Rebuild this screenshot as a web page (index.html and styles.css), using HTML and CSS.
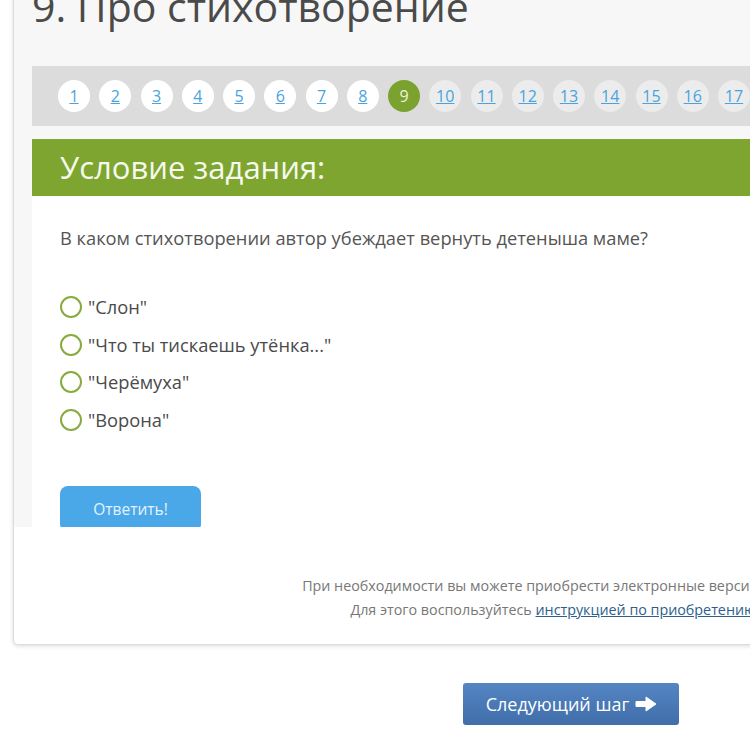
FILE: index.html
```html
<!DOCTYPE html>
<html lang="ru">
<head>
  <meta charset="UTF-8">
  <title>9. Про стихотворение</title>
  <link rel="stylesheet" href="styles.css">
</head>
<body>

<div class="page">
  <div class="card">
    <!-- серая верхняя часть: заголовок, номера заданий, само задание -->
    <div class="card-top">
      <h1 class="task-title">9. Про стихотворение</h1>

      <div class="steps">
        <a class="step done" href="#">1</a>
        <a class="step done" href="#">2</a>
        <a class="step done" href="#">3</a>
        <a class="step done" href="#">4</a>
        <a class="step done" href="#">5</a>
        <a class="step done" href="#">6</a>
        <a class="step done" href="#">7</a>
        <a class="step done" href="#">8</a>
        <span class="step current">9</span>
        <a class="step" href="#">10</a>
        <a class="step" href="#">11</a>
        <a class="step" href="#">12</a>
        <a class="step" href="#">13</a>
        <a class="step" href="#">14</a>
        <a class="step" href="#">15</a>
        <a class="step" href="#">16</a>
        <a class="step" href="#">17</a>
        <a class="step" href="#">18</a>
      </div>

      <div class="task">
        <div class="task-head">Условие задания:</div>
        <div class="task-body">
          <p class="question">В каком стихотворении автор убеждает вернуть детеныша маме?</p>

          <div class="answers">
            <label class="answer"><span class="radio"></span>"Слон"</label>
            <label class="answer"><span class="radio"></span>"Что ты тискаешь утёнка..."</label>
            <label class="answer"><span class="radio"></span>"Черёмуха"</label>
            <label class="answer"><span class="radio"></span>"Ворона"</label>
          </div>

          <button class="answer-btn">Ответить!</button>
        </div>
      </div>
    </div>

    <!-- нижняя белая часть с пояснением -->
    <div class="card-bottom">
      <p>При необходимости вы можете приобрести электронные версии учебников.</p>
      <p>Для этого воспользуйтесь <a href="#">инструкцией по приобретению</a> ЭФУ.</p>
    </div>
  </div>

  <div class="next-row">
    <a class="next-btn" href="#">
      Следующий шаг
      <svg width="22" height="16" viewBox="0 0 22 16">
        <path d="M1 5.5h10V1l10 7-10 7v-4.5H1z" fill="#fff" stroke="#fff" stroke-width="1" stroke-linejoin="round"/>
      </svg>
    </a>
  </div>
</div>

</body>
</html>
```

FILE: styles.css
```css
* {
  margin: 0;
  padding: 0;
  box-sizing: border-box;
}
html, body {
  background: #fff;
  overflow: hidden;
  font-family: "Open Sans", "Noto Sans", sans-serif;
}

.page {
  margin-top: -18px;
}

/* Карточка задания */
.card {
  width: 1116px;
  margin-left: 13px;
  border-left: 1px solid #dcdcdc;
  border-bottom: 1px solid #dcdcdc;
  border-radius: 0 0 0 5px;
  box-shadow: 0 1px 4px rgba(0, 0, 0, 0.15);
  background: #fff;
}

.card-top {
  height: 545px;
  overflow: hidden;
  background: #f7f7f7;
  padding-left: 18px;
}

.task-title {
  font-size: 41px;
  font-weight: 400;
  line-height: 48px;
  color: #4a4a4a;
  margin-bottom: 36px;
}

/* Номера заданий */
.steps {
  height: 60px;
  background: #dcdcdc;
  display: flex;
  align-items: center;
  gap: 9.25px;
  padding-left: 26px;
}
.step {
  flex: none;
  width: 32px;
  height: 32px;
  border-radius: 50%;
  background: #ececec;
  display: flex;
  align-items: center;
  justify-content: center;
  font-size: 16px;
  color: #49a3de;
  text-decoration: underline;
}
.step.done {
  background: #fff;
}
.step.current {
  background: #7ba22e;
  color: #eef3dc;
  text-decoration: none;
}

/* Блок задания */
.task {
  margin-top: 13px;
}
.task-head {
  height: 57px;
  background: #7fa531;
  color: #f6f9ee;
  font-size: 31px;
  line-height: 57px;
  padding-left: 28px;
}
.task-body {
  background: #fff;
  padding: 30px 28px 40px;
}
.question {
  font-size: 18.3px;
  line-height: 24px;
  color: #555;
}
.answers {
  margin-top: 45px;
  display: flex;
  flex-direction: column;
  gap: 13.7px;
}
.answer {
  display: flex;
  align-items: center;
  gap: 6px;
  font-size: 18.3px;
  line-height: 24px;
  color: #4a4a4a;
}
.radio {
  width: 22px;
  height: 22px;
  border: 2.5px solid #88ab3e;
  border-radius: 50%;
  background: #fff;
}
.answer-btn {
  margin-top: 54px;
  width: 141px;
  height: 46px;
  border: none;
  border-radius: 8px;
  background: #4aa8e9;
  color: #e3f2fd;
  font-family: inherit;
  font-size: 15.5px;
  cursor: pointer;
}

/* Пояснение под заданием */
.card-bottom {
  padding: 47px 0 22px;
  text-align: center;
  font-size: 14.3px;
  line-height: 24px;
  color: #777;
}
.card-bottom a {
  color: #2c5f8c;
}

/* Кнопка перехода */
.next-row {
  width: 1116px;
  margin-left: 13px;
  margin-top: 38px;
  text-align: center;
}
.next-btn {
  display: inline-flex;
  align-items: center;
  gap: 6px;
  height: 42px;
  padding: 0 22px 0 23px;
  border-radius: 3px;
  background: linear-gradient(#5585c3, #3f6ea9);
  color: #fff;
  font-size: 18px;
  text-decoration: none;
}
```
